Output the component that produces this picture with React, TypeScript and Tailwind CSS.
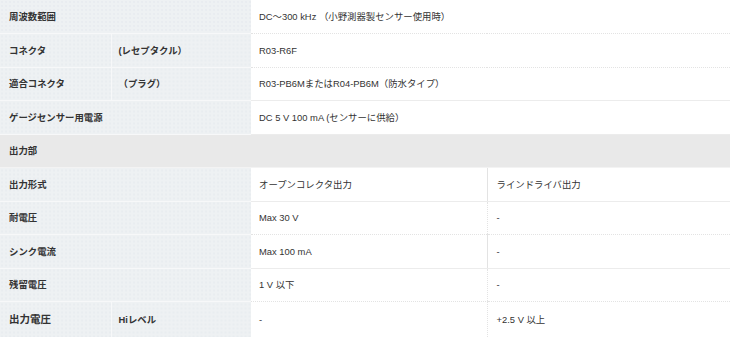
import type { ReactNode } from 'react';

const th =
  'bg-[#eef1f3] bg-[radial-gradient(#e2e7eb_0.6px,transparent_0.8px)] bg-[length:4px_4px] border-b border-[#f7f8f9] px-[9px] text-left align-middle font-bold text-[#333]';
const td =
  'bg-white border-b border-dotted border-[#e3e3e3] px-[8px] text-left align-middle font-normal text-[#333]';

function Row({ children, tall }: { children: ReactNode; tall?: boolean }) {
  return <tr className={tall ? 'h-[36px]' : 'h-[33.5px]'}>{children}</tr>;
}

export default function App() {
  return (
    <div
      className="w-[730px] h-[337px] overflow-hidden bg-white text-[9.4px] leading-none"
      style={{ fontFamily: '"Liberation Sans", "Noto Sans CJK JP", sans-serif' }}
    >
      <table className="w-[730px] table-fixed border-collapse">
        <colgroup>
          <col className="w-[111px]" />
          <col className="w-[140px]" />
          <col className="w-[236px]" />
          <col className="w-[243px]" />
        </colgroup>
        <tbody>
          <Row>
            <th colSpan={2} className={th}>周波数範囲</th>
            <td colSpan={2} className={td}>DC〜300 kHz （小野測器製センサー使用時）</td>
          </Row>
          <Row>
            <th className={th + ' border-r border-r-[#f7f8f9]'}>コネクタ</th>
            <th className={th + ' pl-[7px]'}>(レセプタクル）</th>
            <td colSpan={2} className={td}>R03-R6F</td>
          </Row>
          <Row>
            <th className={th + ' border-r border-r-[#f7f8f9]'}>適合コネクタ</th>
            <th className={th + ' pl-[7px]'}>（プラグ）</th>
            <td colSpan={2} className={td + ' border-solid border-[#ececec]'}>R03-PB6MまたはR04-PB6M（防水タイプ）</td>
          </Row>
          <Row>
            <th colSpan={2} className={th}>ゲージセンサー用電源</th>
            <td colSpan={2} className={td + ' border-solid border-[#ececec]'}>DC 5 V 100 mA (センサーに供給）</td>
          </Row>
          <Row>
            <th
              colSpan={4}
              className="bg-[#e9e9e9] border-b border-[#f3f3f3] px-[9px] text-left align-middle font-bold text-[#333]"
            >
              出力部
            </th>
          </Row>
          <Row>
            <th colSpan={2} className={th}>出力形式</th>
            <td className={td + ' border-solid border-[#ececec]'}>オープンコレクタ出力</td>
            <td className={td + ' border-solid border-[#ececec] border-l border-l-dotted border-l-[#e3e3e3] pl-[9px]'}>ラインドライバ出力</td>
          </Row>
          <Row>
            <th colSpan={2} className={th}>耐電圧</th>
            <td className={td}>Max 30 V</td>
            <td className={td + ' border-l pl-[9px]'}>-</td>
          </Row>
          <Row>
            <th colSpan={2} className={th}>シンク電流</th>
            <td className={td + ' border-solid border-[#ececec]'}>Max 100 mA</td>
            <td className={td + ' border-solid border-[#ececec] border-l border-l-dotted border-l-[#e3e3e3] pl-[9px]'}>-</td>
          </Row>
          <Row>
            <th colSpan={2} className={th}>残留電圧</th>
            <td className={td}>1 V 以下</td>
            <td className={td + ' border-l pl-[9px]'}>-</td>
          </Row>
          <Row tall>
            <th className={th + ' text-[10.5px] border-r border-r-[#f7f8f9]'}>出力電圧</th>
            <th className={th + ' pl-[7px]'}>Hiレベル</th>
            <td className={td}>-</td>
            <td className={td + ' border-l pl-[9px]'}>+2.5 V 以上</td>
          </Row>
        </tbody>
      </table>
    </div>
  );
}
